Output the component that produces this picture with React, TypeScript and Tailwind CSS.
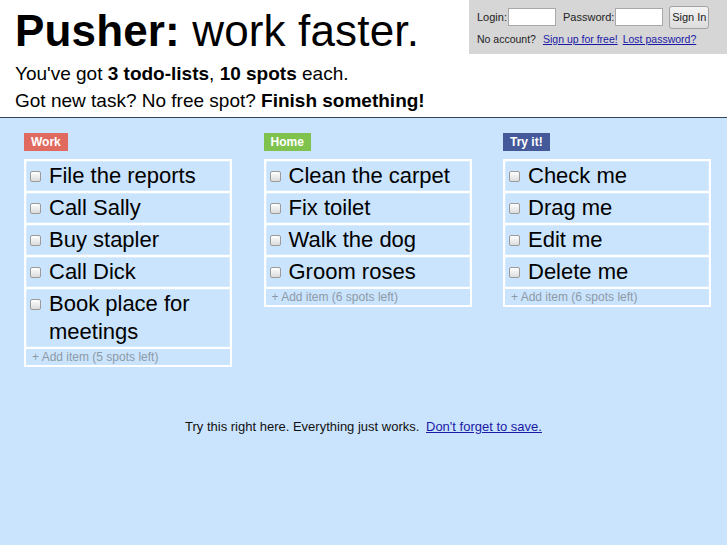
import React from "react";

type List = { label: string; color: string; items: string[]; add: string };

const lists: List[] = [
  {
    label: "Work",
    color: "bg-[#e06a5f]",
    items: ["File the reports", "Call Sally", "Buy stapler", "Call Dick", "Book place for meetings"],
    add: "+ Add item (5 spots left)",
  },
  {
    label: "Home",
    color: "bg-[#80c24e]",
    items: ["Clean the carpet", "Fix toilet", "Walk the dog", "Groom roses"],
    add: "+ Add item (6 spots left)",
  },
  {
    label: "Try it!",
    color: "bg-[#44599a]",
    items: ["Check me", "Drag me", "Edit me", "Delete me"],
    add: "+ Add item (6 spots left)",
  },
];

function Box() {
  return (
    <span className="mt-[9px] h-[11px] w-[11px] shrink-0 rounded-[2px] border border-[#9b9b9b] bg-gradient-to-b from-white to-[#dcdcdc]" />
  );
}

export default function App() {
  return (
    <div
      className="flex min-h-[545px] flex-col text-black"
      style={{ fontFamily: '"Liberation Sans", Arial, sans-serif' }}
    >
      <header className="relative h-[118px] border-b border-[#33475b] bg-white pl-[15px]">
        <h1 className="pt-[9px] text-[44px] leading-[44px] tracking-[0.15px]">
          <span className="font-bold">Pusher:</span> work faster.
        </h1>
        <div className="mt-[7px] text-[19px] leading-[27px]">
          <p>
            You've got <b>3 todo-lists</b>, <b>10 spots</b> each.
          </p>
          <p>
            Got new task? No free spot? <b>Finish something!</b>
          </p>
        </div>
        <div className="absolute right-0 top-0 h-[54px] w-[258px] bg-[#d6d6d6] pl-[8px] text-[11px] text-[#222]">
          <div className="flex h-[34px] items-center">
            <span>Login:</span>
            <span className="ml-[1px] h-[18px] w-[48px] border border-[#a9a9a9] bg-white" />
            <span className="ml-[7px]">Password:</span>
            <span className="ml-[1px] h-[18px] w-[48px] border border-[#a9a9a9] bg-white" />
            <span className="ml-[6px] flex h-[23px] w-[40px] items-center justify-center rounded-[3px] border border-[#a3a3a3] bg-gradient-to-b from-[#f4f4f4] to-[#dcdcdc]">
              Sign In
            </span>
          </div>
          <div className="-mt-[2px] flex items-center text-[10.5px]">
            <span>No account?</span>
            <a className="ml-[7px] text-[#1a1aa6] underline" href="#">
              Sign up for free!
            </a>
            <a className="ml-[5px] text-[#1a1aa6] underline" href="#">
              Lost password?
            </a>
          </div>
        </div>
      </header>
      <main className="flex-1 bg-[#cbe4fd]">
        <div className="flex pl-[24px] pt-[11px]">
          {lists.map((l) => (
            <div key={l.label} className="w-[239.5px] shrink-0">
              <span
                className={`inline-flex h-[18px] items-center px-[7px] text-[12px] font-bold text-white ${l.color}`}
              >
                {l.label}
              </span>
              <div className="mt-[6px] flex w-[208px] flex-col gap-[2px] bg-white p-[2px]">
                {l.items.map((it) => (
                  <div
                    key={it}
                    className="flex items-start gap-[8px] border border-dotted border-[#e4f0fc] bg-[#cbe4fd] pl-[3px]"
                  >
                    <Box />
                    <span className="text-[22px] leading-[28px]">{it}</span>
                  </div>
                ))}
                <div className="bg-[#cbe4fd] pl-[6px] text-[12px] leading-[16px] text-[#8d9aa6]">{l.add}</div>
              </div>
            </div>
          ))}
        </div>
        <p className="mt-[50px] text-center text-[13px] text-[#111]">
          Try this right here. Everything just works.{" "}
          <a className="ml-[3px] text-[#1a1aa6] underline" href="#">
            Don't forget to save.
          </a>
        </p>
      </main>
    </div>
  );
}
